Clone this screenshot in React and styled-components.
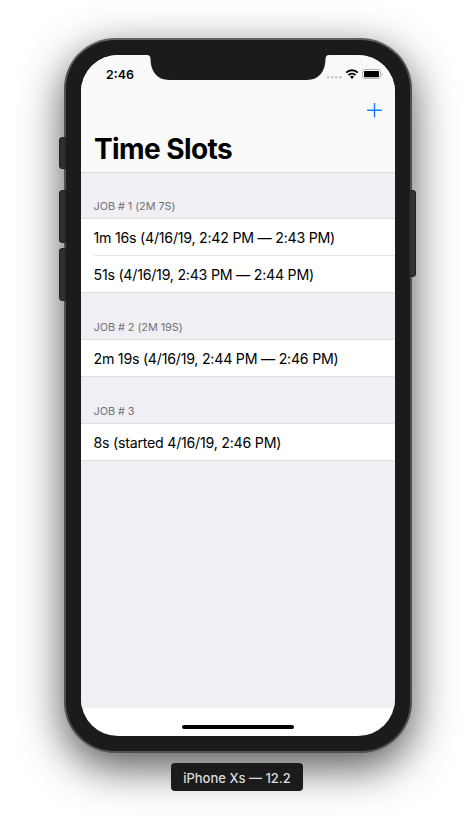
import React from "react";
import styled, { createGlobalStyle } from "styled-components";

const GlobalStyle = createGlobalStyle`
  * { box-sizing: border-box; }
  body {
    margin: 0;
    background: #fff;
    font-family: Inter, "Liberation Sans", sans-serif;
    -webkit-font-smoothing: antialiased;
  }
`;

const Page = styled.main`
  display: flex;
  flex-direction: column;
  align-items: center;
  gap: 10px;
  width: 476px;
  height: 827px;
  padding-top: 38px;
  overflow: hidden;
`;

const Phone = styled.div`
  position: relative;
  width: 348px;
  height: 715px;
  padding: 15px;
  border: 2px solid #505050;
  border-top-color: #626262;
  border-radius: 51px;
  background: #1b1b1b;
  box-shadow: 0 14px 44px rgba(0, 0, 0, 0.68);
`;

const SideButton = styled.span`
  position: absolute;
  top: ${({ $top }) => $top}px;
  ${({ $side }) => ($side === "left" ? "left: -7px" : "right: -6px")};
  width: 7px;
  height: ${({ $height }) => $height}px;
  border: 1px solid #222;
  border-radius: ${({ $side }) => ($side === "left" ? "3px 0 0 3px" : "0 3px 3px 0")};
  background: #303030;
`;

const Screen = styled.div`
  position: relative;
  display: flex;
  flex-direction: column;
  width: 314px;
  height: 681px;
  overflow: hidden;
  border-radius: 37px;
  background: #fff;
`;

const Notch = styled.svg`
  position: absolute;
  top: 0;
  left: 66px;
  display: block;
`;

const NavBar = styled.header`
  display: flex;
  flex-direction: column;
  height: 118px;
  background: #f9f9f9;
  border-bottom: 1px solid #d9d9db;
`;

const StatusBar = styled.div`
  display: flex;
  justify-content: space-between;
  height: 37px;
  padding: 11px 12px 0 25px;
`;

const Clock = styled.time`
  font-size: 12.4px;
  font-weight: 600;
  line-height: 17px;
  letter-spacing: 0;
`;

const StatusIcons = styled.svg`
  display: block;
  margin-top: 1px;
`;

const Toolbar = styled.div`
  display: flex;
  justify-content: flex-end;
  height: 37px;
  padding: 11px 13px 0 0;
`;

const AddButton = styled.button`
  display: block;
  width: 15px;
  height: 15px;
  padding: 0;
  border: 0;
  background: none;
`;

const Title = styled.h1`
  margin: 3px 0 0 13px;
  font-size: 28px;
  font-weight: 700;
  line-height: 35px;
  letter-spacing: -0.58px;
`;

const List = styled.div`
  flex: 1;
  background: #efeff4;
`;

const SectionHeader = styled.h2`
  display: flex;
  align-items: flex-end;
  height: ${({ $first }) => ($first ? 45 : 46)}px;
  margin: 0;
  padding: 0 12.500px 4px;
  color: #737378;
  font-size: 10.9px;
  font-weight: 400;
  line-height: 16px;
  letter-spacing: -0.06px;
`;

const Rows = styled.ul`
  margin: 0;
  padding: 0;
  list-style: none;
  background: #fff;
  border-top: 1px solid #dfdfe3;
  border-bottom: 1px solid #dfdfe3;
`;

const Row = styled.li`
  height: 36px;
  margin-left: 13px;
  text-indent: -0.5px;
  font-size: 14.2px;
  line-height: 37px;
  letter-spacing: -0.24px;
  white-space: nowrap;

  & + & {
    height: 37px;
    border-top: 1px solid #e6e6e8;
  }
`;

const HomeArea = styled.footer`
  display: flex;
  justify-content: center;
  height: 28px;
  padding-top: 17px;
`;

const HomeIndicator = styled.span`
  width: 112px;
  height: 4px;
  border-radius: 2px;
  background: #000;
`;

const DeviceLabel = styled.div`
  position: relative;
  width: 132px;
  height: 28px;
  margin-right: 2px;
  border-radius: 4px;
  background: #1b1b1b;
  color: #dcdcdc;
  font-size: 13px;
  font-weight: 500;
  line-height: 30px;
  text-align: center;
  white-space: nowrap;
`;

const sections = [
  {
    title: "JOB # 1 (2M 7S)",
    rows: ["1m 16s (4/16/19, 2:42 PM — 2:43 PM)", "51s (4/16/19, 2:43 PM — 2:44 PM)"],
  },
  {
    title: "JOB # 2 (2M 19S)",
    rows: ["2m 19s (4/16/19, 2:44 PM — 2:46 PM)"],
  },
  {
    title: "JOB # 3",
    rows: ["8s (started 4/16/19, 2:46 PM)"],
  },
];

export default function App() {
  return (
    <>
      <GlobalStyle />
      <Page>
        <Phone>
          <SideButton $side="left" $top={97} $height={32} />
          <SideButton $side="left" $top={150} $height={53} />
          <SideButton $side="left" $top={208} $height={53} />
          <SideButton $side="right" $top={150} $height={87} />
          <Screen>
            <NavBar>
              <StatusBar>
                <Clock>2:46</Clock>
                <StatusIcons width="56" height="16" viewBox="0 0 56 16">
                  <g fill="#c9c9c9">
                    <rect x="0" y="9" width="2.6" height="2.6" rx="1" />
                    <rect x="4" y="9" width="2.6" height="2.6" rx="1" />
                    <rect x="8" y="9" width="2.6" height="2.6" rx="1" />
                    <rect x="12" y="9" width="2.6" height="2.6" rx="1" />
                  </g>
                  <g fill="none" stroke="#000" strokeWidth="1.9">
                    <path d="M19.2 5.6a8.2 8.2 0 0 1 11.6 0" />
                    <path d="M21.4 8.2a5 5 0 0 1 7.2 0" />
                  </g>
                  <path d="M25 11.9 23 9.8a2.8 2.8 0 0 1 4 0z" />
                  <rect x="35.500" y="2.500" width="18" height="9" rx="2.4" fill="none" stroke="#b4b4b4" />
                  <rect x="37" y="4" width="15" height="6.200" rx="0.8" />
                  <path d="M54.8 5.7c1 .4 1 2.6 0 3z" fill="#999" />
                </StatusIcons>
              </StatusBar>
              <Toolbar>
                <AddButton aria-label="Add">
                  <svg width="15" height="15" viewBox="0 0 15 15" display="block">
                    <path d="M7.5 0v14.3M.2 7.2h14.6" stroke="#0a7aff" strokeWidth="1.4" />
                  </svg>
                </AddButton>
              </Toolbar>
              <Title>Time Slots</Title>
            </NavBar>
            <List>
              {sections.map((section, index) => (
                <section key={section.title}>
                  <SectionHeader $first={index === 0}>{section.title}</SectionHeader>
                  <Rows>
                    {section.rows.map((text) => (
                      <Row key={text}>{text}</Row>
                    ))}
                  </Rows>
                </section>
              ))}
            </List>
            <HomeArea>
              <HomeIndicator />
            </HomeArea>
            <Notch width="182" height="25" viewBox="0 0 182 25">
              <path
                d="M0 0h182q-3.5.2-3.5 4C178.500 16 172 25 160 25H22C10 25 3.500 16 3.500 4Q3.500.2 0 0z"
                fill="#1b1b1b"
              />
            </Notch>
          </Screen>
        </Phone>
        <DeviceLabel>iPhone Xs — 12.2</DeviceLabel>
      </Page>
    </>
  );
}
